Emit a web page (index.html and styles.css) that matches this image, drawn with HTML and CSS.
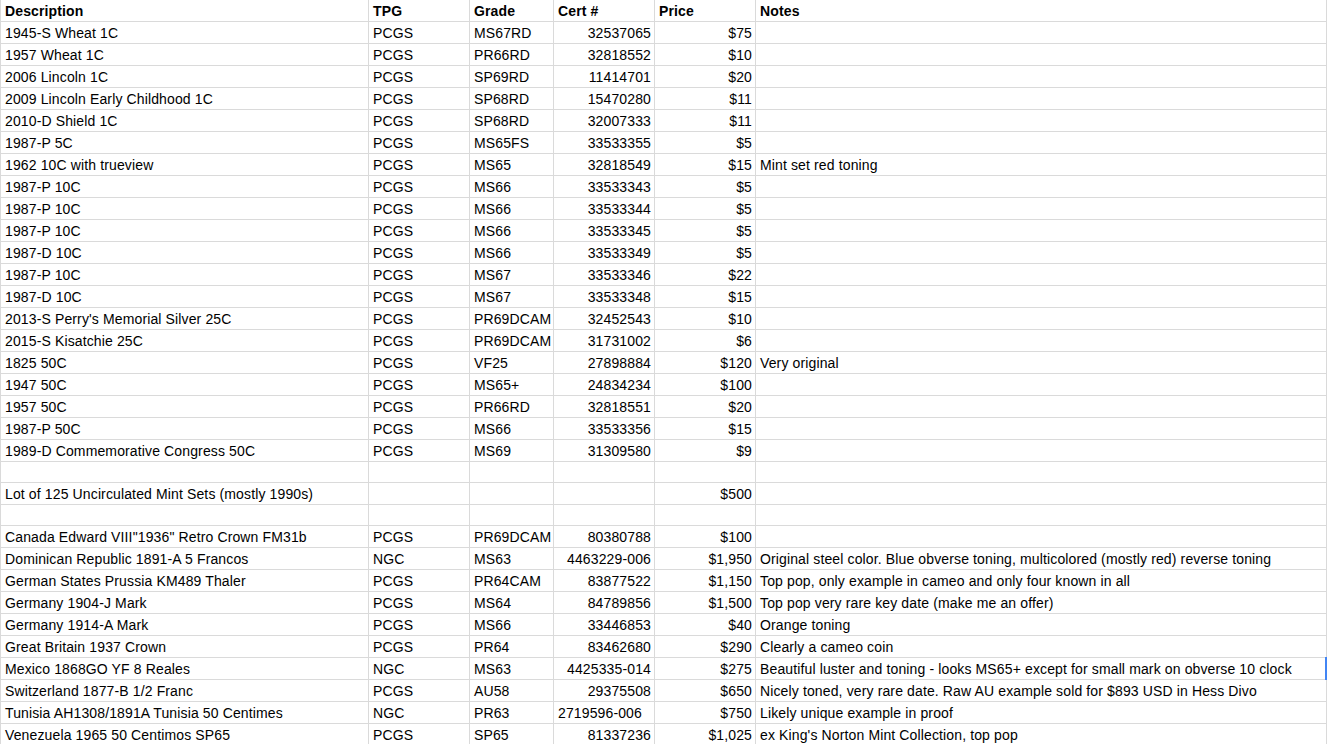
FILE: index.html
```html
<!DOCTYPE html>
<html>
<head>
<meta charset="utf-8">
<link rel="stylesheet" href="styles.css">
</head>
<body>
<div class="sheet">
  <div class="row head"><div class="c">Description</div><div class="c">TPG</div><div class="c">Grade</div><div class="c">Cert #</div><div class="c">Price</div><div class="c">Notes</div></div>
  <div class="row"><div class="c">1945-S Wheat 1C</div><div class="c">PCGS</div><div class="c">MS67RD</div><div class="c r">32537065</div><div class="c r">$75</div><div class="c"></div></div>
  <div class="row"><div class="c">1957 Wheat 1C</div><div class="c">PCGS</div><div class="c">PR66RD</div><div class="c r">32818552</div><div class="c r">$10</div><div class="c"></div></div>
  <div class="row"><div class="c">2006 Lincoln 1C</div><div class="c">PCGS</div><div class="c">SP69RD</div><div class="c r">11414701</div><div class="c r">$20</div><div class="c"></div></div>
  <div class="row"><div class="c">2009 Lincoln Early Childhood 1C</div><div class="c">PCGS</div><div class="c">SP68RD</div><div class="c r">15470280</div><div class="c r">$11</div><div class="c"></div></div>
  <div class="row"><div class="c">2010-D Shield 1C</div><div class="c">PCGS</div><div class="c">SP68RD</div><div class="c r">32007333</div><div class="c r">$11</div><div class="c"></div></div>
  <div class="row"><div class="c">1987-P 5C</div><div class="c">PCGS</div><div class="c">MS65FS</div><div class="c r">33533355</div><div class="c r">$5</div><div class="c"></div></div>
  <div class="row"><div class="c">1962 10C with trueview</div><div class="c">PCGS</div><div class="c">MS65</div><div class="c r">32818549</div><div class="c r">$15</div><div class="c">Mint set red toning</div></div>
  <div class="row"><div class="c">1987-P 10C</div><div class="c">PCGS</div><div class="c">MS66</div><div class="c r">33533343</div><div class="c r">$5</div><div class="c"></div></div>
  <div class="row"><div class="c">1987-P 10C</div><div class="c">PCGS</div><div class="c">MS66</div><div class="c r">33533344</div><div class="c r">$5</div><div class="c"></div></div>
  <div class="row"><div class="c">1987-P 10C</div><div class="c">PCGS</div><div class="c">MS66</div><div class="c r">33533345</div><div class="c r">$5</div><div class="c"></div></div>
  <div class="row"><div class="c">1987-D 10C</div><div class="c">PCGS</div><div class="c">MS66</div><div class="c r">33533349</div><div class="c r">$5</div><div class="c"></div></div>
  <div class="row"><div class="c">1987-P 10C</div><div class="c">PCGS</div><div class="c">MS67</div><div class="c r">33533346</div><div class="c r">$22</div><div class="c"></div></div>
  <div class="row"><div class="c">1987-D 10C</div><div class="c">PCGS</div><div class="c">MS67</div><div class="c r">33533348</div><div class="c r">$15</div><div class="c"></div></div>
  <div class="row"><div class="c">2013-S Perry's Memorial Silver 25C</div><div class="c">PCGS</div><div class="c">PR69DCAM</div><div class="c r">32452543</div><div class="c r">$10</div><div class="c"></div></div>
  <div class="row"><div class="c">2015-S Kisatchie 25C</div><div class="c">PCGS</div><div class="c">PR69DCAM</div><div class="c r">31731002</div><div class="c r">$6</div><div class="c"></div></div>
  <div class="row"><div class="c">1825 50C</div><div class="c">PCGS</div><div class="c">VF25</div><div class="c r">27898884</div><div class="c r">$120</div><div class="c">Very original</div></div>
  <div class="row"><div class="c">1947 50C</div><div class="c">PCGS</div><div class="c">MS65+</div><div class="c r">24834234</div><div class="c r">$100</div><div class="c"></div></div>
  <div class="row"><div class="c">1957 50C</div><div class="c">PCGS</div><div class="c">PR66RD</div><div class="c r">32818551</div><div class="c r">$20</div><div class="c"></div></div>
  <div class="row"><div class="c">1987-P 50C</div><div class="c">PCGS</div><div class="c">MS66</div><div class="c r">33533356</div><div class="c r">$15</div><div class="c"></div></div>
  <div class="row"><div class="c">1989-D Commemorative Congress 50C</div><div class="c">PCGS</div><div class="c">MS69</div><div class="c r">31309580</div><div class="c r">$9</div><div class="c"></div></div>
  <div class="row short"><div class="c"></div><div class="c"></div><div class="c"></div><div class="c"></div><div class="c"></div><div class="c"></div></div>
  <div class="row"><div class="c">Lot of 125 Uncirculated Mint Sets (mostly 1990s)</div><div class="c"></div><div class="c"></div><div class="c"></div><div class="c r">$500</div><div class="c"></div></div>
  <div class="row short"><div class="c"></div><div class="c"></div><div class="c"></div><div class="c"></div><div class="c"></div><div class="c"></div></div>
  <div class="row"><div class="c">Canada Edward VIII"1936" Retro Crown FM31b</div><div class="c">PCGS</div><div class="c">PR69DCAM</div><div class="c r">80380788</div><div class="c r">$100</div><div class="c"></div></div>
  <div class="row"><div class="c">Dominican Republic 1891-A 5 Francos</div><div class="c">NGC</div><div class="c">MS63</div><div class="c r">4463229-006</div><div class="c r">$1,950</div><div class="c">Original steel color. Blue obverse toning, multicolored (mostly red) reverse toning</div></div>
  <div class="row"><div class="c">German States Prussia KM489 Thaler</div><div class="c">PCGS</div><div class="c">PR64CAM</div><div class="c r">83877522</div><div class="c r">$1,150</div><div class="c">Top pop, only example in cameo and only four known in all</div></div>
  <div class="row"><div class="c">Germany 1904-J Mark</div><div class="c">PCGS</div><div class="c">MS64</div><div class="c r">84789856</div><div class="c r">$1,500</div><div class="c">Top pop very rare key date (make me an offer)</div></div>
  <div class="row"><div class="c">Germany 1914-A Mark</div><div class="c">PCGS</div><div class="c">MS66</div><div class="c r">33446853</div><div class="c r">$40</div><div class="c">Orange toning</div></div>
  <div class="row"><div class="c">Great Britain 1937 Crown</div><div class="c">PCGS</div><div class="c">PR64</div><div class="c r">83462680</div><div class="c r">$290</div><div class="c">Clearly a cameo coin</div></div>
  <div class="row"><div class="c">Mexico 1868GO YF 8 Reales</div><div class="c">NGC</div><div class="c">MS63</div><div class="c r">4425335-014</div><div class="c r">$275</div><div class="c sel">Beautiful luster and toning - looks MS65+ except for small mark on obverse 10 clock</div></div>
  <div class="row"><div class="c">Switzerland 1877-B 1/2 Franc</div><div class="c">PCGS</div><div class="c">AU58</div><div class="c r">29375508</div><div class="c r">$650</div><div class="c">Nicely toned, very rare date. Raw AU example sold for $893 USD in Hess Divo</div></div>
  <div class="row"><div class="c">Tunisia AH1308/1891A Tunisia 50 Centimes</div><div class="c">NGC</div><div class="c">PR63</div><div class="c">2719596-006</div><div class="c r">$750</div><div class="c">Likely unique example in proof</div></div>
  <div class="row"><div class="c">Venezuela 1965 50 Centimos SP65</div><div class="c">PCGS</div><div class="c">SP65</div><div class="c r">81337236</div><div class="c r">$1,025</div><div class="c">ex King's Norton Mint Collection, top pop</div></div>
</div>
</body>
</html>
```

FILE: styles.css
```css
html, body {
  margin: 0;
  padding: 0;
  background: #ffffff;
}
body {
  font-family: "Liberation Sans", Arial, sans-serif;
  font-size: 14px;
  letter-spacing: 0.13px;
  color: #000000;
  overflow: hidden;
}
.sheet {
  width: 1327px;
  display: flex;
  flex-direction: column;
}
.row {
  display: grid;
  grid-template-columns: 368px 101px 84px 101px 101px 571px;
  border-left: 1px solid #dadada;
  height: 22px;
  box-sizing: border-box;
}
.row.short {
  height: 21px;
}
.c {
  box-sizing: border-box;
  border-right: 1px solid #dadada;
  border-bottom: 1px solid #dadada;
  padding: 0 3px 2px 4px;
  line-height: 16px;
  white-space: nowrap;
  overflow: visible;
  display: flex;
  align-items: flex-end;
  position: relative;
}
.c.r {
  justify-content: flex-end;
  padding-right: 3px;
}
.head .c {
  font-weight: bold;
}
.sel::after {
  content: "";
  position: absolute;
  right: -1px;
  top: -1px;
  bottom: -1px;
  width: 2px;
  background: #4285f4;
}
```
